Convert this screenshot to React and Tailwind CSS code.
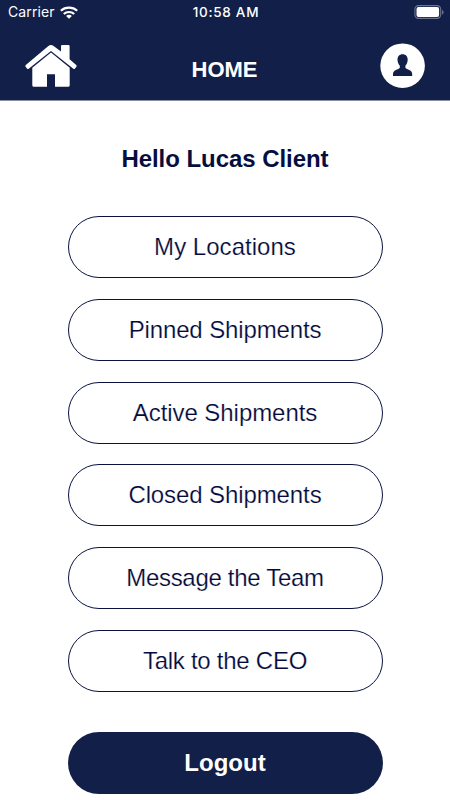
import React from 'react';

const menuItems = [
  { id: 'locations', label: 'My Locations', spacing: 'tracking-[0.03px]' },
  { id: 'pinned', label: 'Pinned Shipments', spacing: 'tracking-[-0.13px]' },
  { id: 'active', label: 'Active Shipments', spacing: 'tracking-[-0.06px]' },
  { id: 'closed', label: 'Closed Shipments', spacing: 'tracking-[-0.1px]' },
  { id: 'message', label: 'Message the Team', spacing: 'tracking-[-0.3px]' },
  { id: 'ceo', label: 'Talk to the CEO', spacing: 'tracking-[-0.26px]' },
];

const WifiIcon = () => (
  <svg className="w-[18px] h-[13px]" viewBox="0 0 18 13" fill="none" stroke="#fff" strokeWidth="2.2">
    <path d="M0.8 4.7C5.3 0.5 12.7 0.5 17.2 4.7" />
    <path d="M3.8 8C6.6 5.3 11.4 5.3 14.2 8" />
    <path d="M9 12.8L6.1 9.9C7.8 8.5 10.2 8.5 11.9 9.9Z" fill="#fff" stroke="none" />
  </svg>
);

const BatteryIcon = () => (
  <svg className="w-[30px] h-[15px]" viewBox="0 0 30 15" fill="none">
    <rect x="0.9" y="0.6" width="25.8" height="12.8" rx="3.6" stroke="#6d7490" strokeWidth="1.1" />
    <rect x="2.5" y="2.1" width="22.6" height="9.8" rx="2" fill="#fff" />
    <path d="M28 5v4.6c1-.4 1.6-1.3 1.6-2.3s-.6-1.9-1.6-2.3z" fill="#6d7490" />
  </svg>
);

const HomeIcon = () => (
  <svg className="w-[54px] h-[44px]" viewBox="0 0 54 44" fill="#fff">
    <path d="M37 8.6V3.2Q37 2 38.2 2H44.4Q45.6 2 45.6 3.2V16.2L52.2 21.9Q53.2 22.8 52.4 23.8L51 25.4Q50.1 26.4 49 25.4L27 7.9L5 25.4Q3.9 26.4 3 25.4L1.6 23.8Q.8 22.8 1.8 21.9L24.4 3.1Q27 1 29.6 3.1Z" />
    <path d="M27 9.4L45.7 24.8V42.2Q45.7 43.8 44.1 43.8H31V31.2H23V43.8H9.9Q8.3 43.8 8.3 42.2V24.8Z" />
  </svg>
);

const ProfileIcon = () => (
  <svg className="w-[46px] h-[46px]" viewBox="0 0 46 46">
    <circle cx="22.6" cy="22.7" r="22.3" fill="#fff" />
    <path
      d="M22.6 11.2c3.2 0 5.1 2.2 5.1 5.4 0 2.5-.9 4.7-2.3 6.1v2.1c.7 1.1 2.4 1.5 3.9 2.2 2 .9 2.9 2.3 2.9 4v2H13v-2c0-1.7.9-3.1 2.9-4 1.5-.7 3.2-1.1 3.9-2.2v-2.1c-1.4-1.4-2.3-3.6-2.3-6.1 0-3.2 1.9-5.4 5.1-5.4z"
      fill="#121f48"
    />
  </svg>
);

const StatusBar = () => (
  <div className="grid grid-cols-3 items-center h-6 pl-2 pr-[6px] text-white">
    <div className="flex items-center gap-[5px] font-['Inter'] text-[14px] leading-6 tracking-[0.1px]">
      <span>Carrier</span>
      <WifiIcon />
    </div>
    <div className="text-center font-['Inter'] font-medium text-[13.5px] leading-6 tracking-[0.7px]">10:58 AM</div>
    <div className="flex justify-end">
      <BatteryIcon />
    </div>
  </div>
);

const Header = () => (
  <header className="h-[101px] bg-[#121f48] border-b border-[#8b8fa5]">
    <StatusBar />
    <div className="flex items-start justify-between pl-6 pr-6 pt-[19px]">
      <button aria-label="Home">
        <HomeIcon />
      </button>
      <h1 className="pt-[13px] pr-[9px] text-white font-bold text-[22px] leading-7">HOME</h1>
      <button aria-label="Profile">
        <ProfileIcon />
      </button>
    </div>
  </header>
);

const MenuButton = ({ label, spacing }) => (
  <button
    className={`w-full h-[62px] rounded-full border border-[#0a1240] text-[24px] leading-7 text-[#03093a] [-webkit-text-stroke:0.2px_white] ${spacing}`}
  >
    {label}
  </button>
);

const App = () => {
  return (
    <div className="w-[450px] h-[800px] overflow-hidden bg-white font-['Liberation_Sans',sans-serif]">
      <Header />
      <main className="flex flex-col items-center">
        <h2 className="mt-[44px] font-bold text-[24px] leading-7 tracking-[-0.05px] text-[#060e40]">Hello Lucas Client</h2>
        <nav className="mt-[43px] w-[315px] flex flex-col gap-[20.8px]">
          {menuItems.map((item) => (
            <MenuButton key={item.id} label={item.label} spacing={item.spacing} />
          ))}
        </nav>
        <button className="mt-10 w-[315px] h-[62px] rounded-full bg-[#121f48] text-white font-bold text-[24px] leading-7">
          Logout
        </button>
      </main>
    </div>
  );
};

export default App;
